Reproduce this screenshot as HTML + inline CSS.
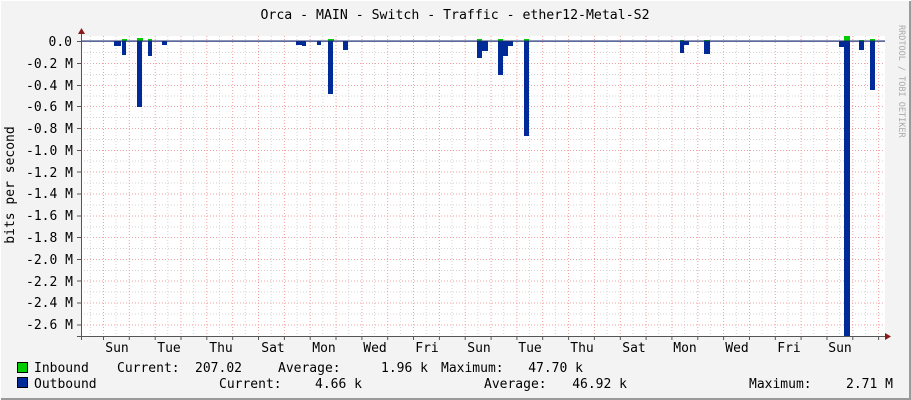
<!DOCTYPE html>
<html><head><meta charset="utf-8"><style>
html,body{margin:0;padding:0;background:#f3f3f3;}
svg{display:block;font-family:"DejaVu Sans Mono","Liberation Mono",monospace;}
text{white-space:pre;}
</style></head><body>
<svg width="911" height="400" viewBox="0 0 911 400" xmlns="http://www.w3.org/2000/svg">
<rect x="0" y="0" width="911" height="400" fill="#f3f3f3"/>
<rect x="909" y="0" width="2" height="400" fill="#9a9a9a"/>
<rect x="0" y="398" width="911" height="2" fill="#9a9a9a"/>
<rect x="0" y="0" width="911" height="1" fill="#ffffff"/>
<rect x="0" y="0" width="1" height="400" fill="#ffffff"/>
<rect x="81" y="36" width="804" height="300" fill="#ffffff"/>
<g stroke-width="1" stroke-dasharray="1,2">
<path stroke="#d4d4d4" d="M81 52.5H885M81 74.5H885M81 96H885M81 117.5H885M81 139.5H885M81 161H885M81 183H885M81 205H885M81 227H885M81 248.5H885M81 270.5H885M81 292H885M81 314H885"/>
<path stroke="#f0a0a0" d="M81 63.5H885M81 85.5H885M81 106.5H885M81 128.5H885M81 150.5H885M81 172H885M81 194H885M81 216H885M81 237.5H885M81 259.5H885M81 281H885M81 303H885M81 325H885"/>
<path stroke="#d4d4d4" d="M90.3 36V336M116.1 36V336M142 36V336M167.8 36V336M193.6 36V336M219.5 36V336M245.3 36V336M271.2 36V336M297 36V336M322.8 36V336M348.7 36V336M374.5 36V336M400.4 36V336M426.2 36V336M452 36V336M477.9 36V336M503.7 36V336M529.5 36V336M555.4 36V336M581.2 36V336M607.1 36V336M632.9 36V336M658.7 36V336M684.6 36V336M710.4 36V336M736.3 36V336M762.1 36V336M787.9 36V336M813.8 36V336M839.6 36V336M865.5 36V336"/>
<path stroke="#f0a0a0" d="M103.5 36V336M129.3 36V336M155.2 36V336M181 36V336M206.8 36V336M232.7 36V336M258.5 36V336M284.4 36V336M310.2 36V336M336 36V336M361.9 36V336M387.7 36V336M413.5 36V336M439.4 36V336M465.2 36V336M491.1 36V336M516.9 36V336M542.7 36V336M568.6 36V336M594.4 36V336M620.3 36V336M646.1 36V336M671.9 36V336M697.8 36V336M723.6 36V336M749.5 36V336M775.3 36V336M801.1 36V336M827 36V336M852.8 36V336M878.6 36V336"/>
</g>
<g fill="#002a97">
<rect x="114" y="41" width="7" height="5"/><rect x="122" y="41" width="4" height="14"/><rect x="137" y="41" width="5" height="66"/><rect x="148" y="41" width="4" height="15"/><rect x="162" y="41" width="5" height="4"/>
<rect x="296" y="41" width="6" height="4"/><rect x="302" y="41" width="4" height="5"/><rect x="317" y="41" width="4" height="4"/><rect x="328" y="41" width="5" height="53"/><rect x="343" y="41" width="5" height="9"/>
<rect x="477" y="41" width="5" height="17"/><rect x="482" y="41" width="6" height="10"/><rect x="498" y="41" width="5" height="34"/><rect x="503" y="41" width="5" height="15"/><rect x="508" y="41" width="5" height="5"/><rect x="524" y="41" width="5" height="95"/>
<rect x="680" y="41" width="4" height="12"/><rect x="684" y="41" width="5" height="4"/><rect x="704" y="41" width="6" height="13"/>
<rect x="839" y="41" width="5" height="6"/><rect x="844" y="41" width="6" height="295"/><rect x="859" y="41" width="5" height="9"/><rect x="870" y="41" width="5" height="49"/>
</g>
<g fill="#00cc00">
<rect x="122" y="39" width="5" height="2"/><rect x="137" y="38" width="6" height="3"/><rect x="148" y="39" width="4" height="2"/>
<rect x="328" y="39" width="6" height="2"/>
<rect x="477" y="39" width="5" height="2"/><rect x="498" y="39" width="5" height="2"/><rect x="524" y="39" width="5" height="2"/>
<rect x="680" y="40" width="4" height="1"/><rect x="704" y="40" width="6" height="1"/>
<rect x="844" y="36" width="6" height="5"/><rect x="859" y="40" width="5" height="1"/><rect x="870" y="39" width="5" height="2"/>
</g>
<rect x="81" y="40.5" width="804" height="1.2" fill="#1a2a70"/>
<g stroke="#555" stroke-width="1">
<path d="M81.5 33V340M77 336.5H886"/>
<path d="M77 41.5H81M77 63.5H81M77 85.5H81M77 106.5H81M77 128.5H81M77 150.5H81M77 172H81M77 194H81M77 216H81M77 237.5H81M77 259.5H81M77 281H81M77 303H81M77 325H81"/>
<path d="M103.5 336V340M129.3 336V340M155.2 336V340M181 336V340M206.8 336V340M232.7 336V340M258.5 336V340M284.4 336V340M310.2 336V340M336 336V340M361.9 336V340M387.7 336V340M413.5 336V340M439.4 336V340M465.2 336V340M491.1 336V340M516.9 336V340M542.7 336V340M568.6 336V340M594.4 336V340M620.3 336V340M646.1 336V340M671.9 336V340M697.8 336V340M723.6 336V340M749.5 336V340M775.3 336V340M801.1 336V340M827 336V340M852.8 336V340M878.6 336V340"/>
</g>
<path d="M78 34L81.5 28L85 34Z" fill="#8b1a1a"/>
<path d="M885 333L891 336.5L885 340Z" fill="#8b1a1a"/>
<text x="455" y="19" font-size="13.2" text-anchor="middle" fill="#000">Orca - MAIN - Switch - Traffic - ether12-Metal-S2</text>
<g font-size="13" fill="#000" text-anchor="end">
<text x="72" y="46">0.0</text><text x="73" y="68">-0.2 M</text><text x="73" y="90">-0.4 M</text><text x="73" y="111">-0.6 M</text><text x="73" y="133">-0.8 M</text><text x="73" y="155">-1.0 M</text><text x="73" y="177">-1.2 M</text><text x="73" y="198">-1.4 M</text><text x="73" y="220">-1.6 M</text><text x="73" y="242">-1.8 M</text><text x="73" y="264">-2.0 M</text><text x="73" y="286">-2.2 M</text><text x="73" y="307">-2.4 M</text><text x="73" y="329">-2.6 M</text>
</g>
<g font-size="13" fill="#000" text-anchor="middle">
<text x="117" y="352">Sun</text><text x="169" y="352">Tue</text><text x="221" y="352">Thu</text><text x="273" y="352">Sat</text><text x="324" y="352">Mon</text><text x="375" y="352">Wed</text><text x="427" y="352">Fri</text><text x="479" y="352">Sun</text><text x="530" y="352">Tue</text><text x="582" y="352">Thu</text><text x="634" y="352">Sat</text><text x="685" y="352">Mon</text><text x="737" y="352">Wed</text><text x="789" y="352">Fri</text><text x="840" y="352">Sun</text>
</g>
<text transform="translate(14 185) rotate(-90)" font-size="13" text-anchor="middle" fill="#000">bits per second</text>
<text transform="translate(899 25) rotate(90)" font-size="8.5" fill="#aaaaaa">RRDTOOL / TOBI OETIKER</text>
<rect x="17.5" y="362.5" width="10" height="10" fill="#00cc00" stroke="#000"/>
<rect x="17.5" y="377.5" width="10" height="10" fill="#002a97" stroke="#000"/>
<g font-size="13" fill="#000">
<text x="34" y="372">Inbound</text>
<text x="117" y="372">Current:</text><text x="242" y="372" text-anchor="end">207.02</text>
<text x="278" y="372">Average:</text><text x="428" y="372" text-anchor="end">1.96 k</text>
<text x="441" y="372">Maximum:</text><text x="583" y="372" text-anchor="end">47.70 k</text>
<text x="34" y="388">Outbound</text>
<text x="219" y="388">Current:</text><text x="362" y="388" text-anchor="end">4.66 k</text>
<text x="484" y="388">Average:</text><text x="627" y="388" text-anchor="end">46.92 k</text>
<text x="749" y="388">Maximum:</text><text x="893" y="388" text-anchor="end">2.71 M</text>
</g>
</svg>
</body></html>
